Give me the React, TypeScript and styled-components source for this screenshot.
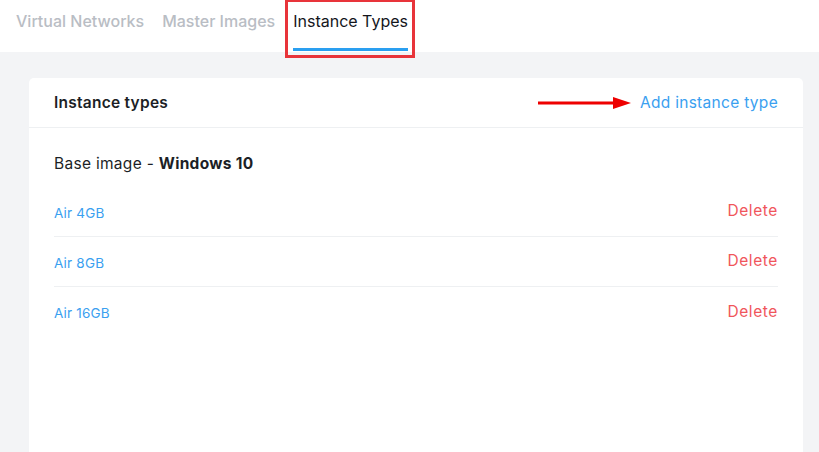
import React from "react";
import styled, { createGlobalStyle } from "styled-components";

const Global = createGlobalStyle`
  html, body { margin: 0; padding: 0; }
  body {
    background: #f3f4f6;
    font-family: "Inter", "Open Sans", "Liberation Sans", sans-serif;
    -webkit-font-smoothing: antialiased;
  }
  * { box-sizing: border-box; }
`;

const Page = styled.div`
  min-height: 452px;
  display: flex;
  flex-direction: column;
`;

const TabBar = styled.nav`
  height: 52px;
  background: #ffffff;
  display: flex;
  align-items: stretch;
  padding-left: 16px;
  gap: 18px;
`;

const Tab = styled.div<{ $active?: boolean }>`
  position: relative;
  display: flex;
  align-items: flex-start;
  padding-top: 11px;
  font-size: 16px;
  letter-spacing: 0;
  color: ${(p) => (p.$active ? "#14161c" : "#b9bdc4")};
  font-weight: ${(p) => (p.$active ? 400 : 500)};
  border-bottom: 3px solid ${(p) => (p.$active ? "#2a9ff0" : "transparent")};
  margin-bottom: 1px;
`;

const Highlight = styled.span`
  position: absolute;
  left: -8px;
  right: -7px;
  top: -1px;
  height: 59px;
  border: 3px solid #e8343a;
  pointer-events: none;
`;

const Content = styled.main`
  flex: 1;
  display: flex;
  flex-direction: column;
  padding: 26px 16px 0 29px;
`;

const Card = styled.section`
  flex: 1;
  background: #ffffff;
  border-radius: 5px 5px 0 0;
  display: flex;
  flex-direction: column;
`;

const CardHeader = styled.header`
  height: 50px;
  border-bottom: 1px solid #eef0f2;
  display: flex;
  align-items: center;
  justify-content: space-between;
  padding: 0 25px;
`;

const Title = styled.h2`
  margin: 0;
  font-size: 15.5px;
  font-weight: 600;
  color: #1c1f26;
  letter-spacing: 0.25px;
`;

const HeaderAction = styled.div`
  display: flex;
  align-items: center;
  gap: 9px;
`;

const LinkButton = styled.a`
  font-size: 15.5px;
  color: #3aa0f0;
  cursor: pointer;
  letter-spacing: 0.3px;
`;

const CardBody = styled.div`
  padding: 25px 25px 0;
  display: flex;
  flex-direction: column;
`;

const BaseImage = styled.div`
  font-size: 15.5px;
  line-height: 22px;
  color: #1c1f26;
  margin-bottom: 12px;
  letter-spacing: 0.3px;
  b { font-weight: 700; }
`;

const Row = styled.div`
  height: 50px;
  display: flex;
  align-items: center;
  justify-content: space-between;
  border-bottom: 1px solid #eef0f2;
  &:last-child { border-bottom: none; }
`;

const TypeName = styled.a`
  font-size: 13.5px;
  color: #3aa0f0;
  padding-top: 2px;
  letter-spacing: 0.2px;
`;

const DeleteButton = styled.a`
  font-size: 15.5px;
  color: #f0565b;
  cursor: pointer;
  margin-top: -2px;
  letter-spacing: 0.6px;
`;

const Arrow = () => (
  <svg width="93" height="14" viewBox="0 0 93 14" aria-hidden>
    <rect x="0" y="5.5" width="76" height="3" fill="#ee0000" />
    <polygon points="75,1 93,7 75,13" fill="#ee0000" />
  </svg>
);

const types = ["Air 4GB", "Air 8GB", "Air 16GB"];

export default function App() {
  return (
    <Page>
      <Global />
      <TabBar>
        <Tab>Virtual Networks</Tab>
        <Tab>Master Images</Tab>
        <Tab $active>
          Instance Types
          <Highlight />
        </Tab>
      </TabBar>
      <Content>
        <Card>
          <CardHeader>
            <Title>Instance types</Title>
            <HeaderAction>
              <Arrow />
              <LinkButton>Add instance type</LinkButton>
            </HeaderAction>
          </CardHeader>
          <CardBody>
            <BaseImage>
              Base image - <b>Windows 10</b>
            </BaseImage>
            {types.map((t) => (
              <Row key={t}>
                <TypeName>{t}</TypeName>
                <DeleteButton>Delete</DeleteButton>
              </Row>
            ))}
          </CardBody>
        </Card>
      </Content>
    </Page>
  );
}
